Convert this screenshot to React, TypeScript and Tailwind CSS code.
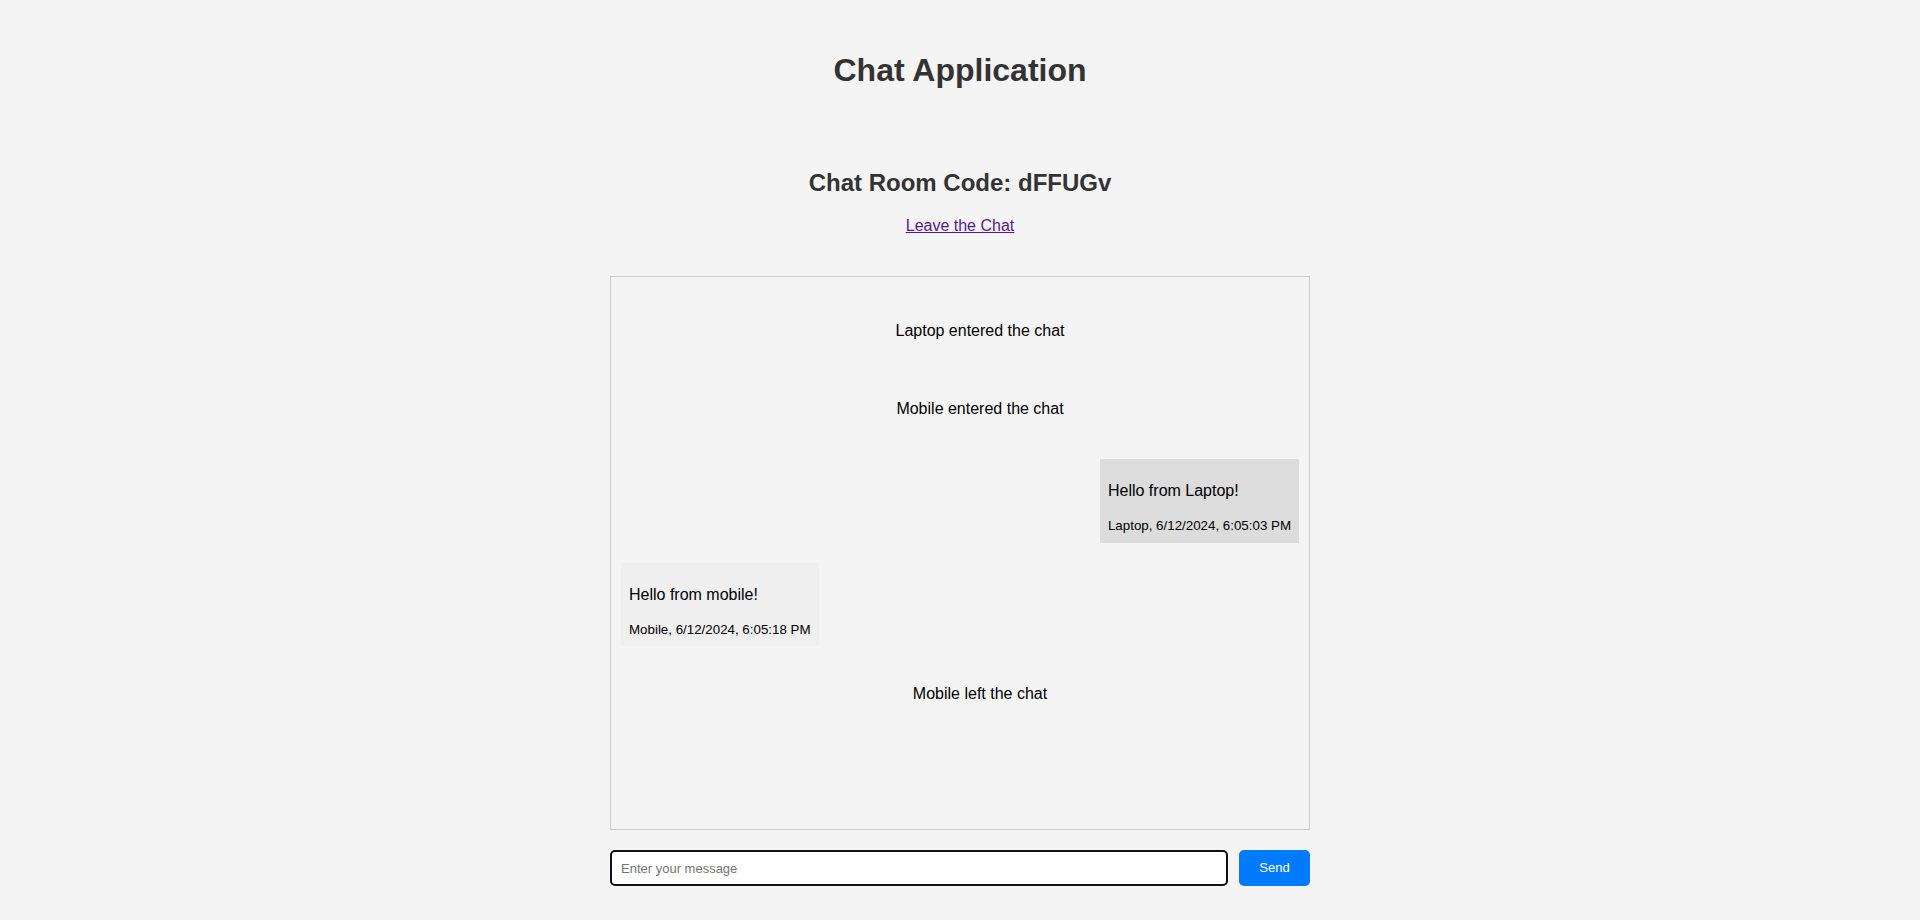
import React from "react";

export default function App() {
  return (
    <div
      className="min-h-[920px] w-full bg-[#f4f4f4] flex flex-col items-center text-[#333]"
      style={{ fontFamily: '"Liberation Sans", Arial, sans-serif' }}
    >
      <h1 className="mt-[52px] text-[32px] leading-[37px] font-bold text-[#333]">
        Chat Application
      </h1>
      <h2 className="mt-[80px] text-[24px] leading-[28px] font-bold text-[#333]">
        Chat Room Code: dFFUGv
      </h2>
      <a
        href="#"
        className="mt-[20px] text-[16px] leading-[18px] text-[#551a8b] underline"
      >
        Leave the Chat
      </a>

      <div className="mt-[41px] w-[700px] h-[554px] border border-[#cccccc] p-[10px] flex flex-col overflow-y-auto text-black">
        <div className="mt-[35px] pl-[40px] text-center text-[16px] leading-[18px]">
          Laptop entered the chat
        </div>
        <div className="mt-[60px] pl-[40px] text-center text-[16px] leading-[18px]">
          Mobile entered the chat
        </div>
        <div className="mt-[41px] self-end bg-[#dcdcdc] px-[8px] pt-[23px] pb-[9px]">
          <div className="text-[16px] leading-[18px]">Hello from Laptop!</div>
          <div className="mt-[18px] text-[13.33px] leading-[16px]">
            Laptop, 6/12/2024, 6:05:03 PM
          </div>
        </div>
        <div className="mt-[20px] self-start bg-[#efefef] px-[8px] pt-[23px] pb-[8px]">
          <div className="text-[16px] leading-[18px]">Hello from mobile!</div>
          <div className="mt-[18px] text-[13.33px] leading-[16px]">
            Mobile, 6/12/2024, 6:05:18 PM
          </div>
        </div>
        <div className="mt-[39px] pl-[40px] text-center text-[16px] leading-[18px]">
          Mobile left the chat
        </div>
      </div>

      <div className="mt-[20px] w-[700px] flex gap-[11px]">
        <input
          type="text"
          placeholder="Enter your message"
          className="flex-1 h-[36px] border-2 border-[#111] rounded-[5px] bg-white px-[9px] text-[13px] text-black placeholder:text-[#757575] outline-none"
          style={{ fontFamily: '"Liberation Sans", Arial, sans-serif' }}
        />
        <button className="w-[71px] h-[36px] rounded-[5px] bg-[#007bff] text-white text-[13px]">
          Send
        </button>
      </div>
    </div>
  );
}
